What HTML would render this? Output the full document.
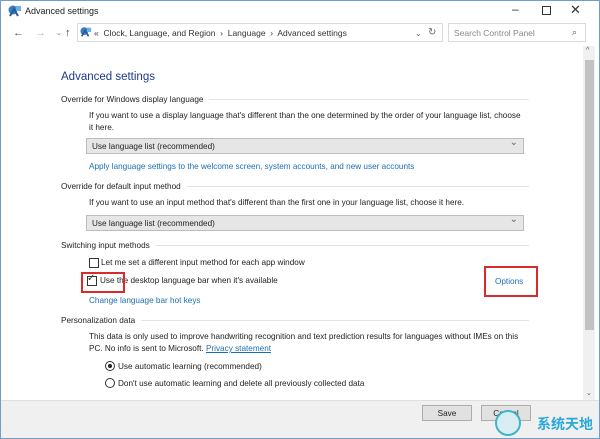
<!DOCTYPE html>
<html><head><meta charset="utf-8"><style>
*{box-sizing:border-box;margin:0;padding:0}
body{width:600px;height:439px;overflow:hidden;background:#fff;font-family:"Liberation Sans",sans-serif;font-size:8.2px;color:#222;position:relative}
.a{position:absolute;white-space:nowrap}
.win{position:absolute;left:0;top:0;width:600px;height:439px;border:1px solid #6f9fc8}
.blue{color:#1a6fb4}
.h{position:absolute;left:61px;width:468px;display:flex;align-items:center;white-space:nowrap}
.h:after{content:"";flex:1;height:1px;background:#e3e3e3;margin-left:6px}
.dd{position:absolute;left:86px;width:438px;height:16px;background:#e6e6e6;border:1px solid #bdbdbd;padding:3px 0 0 5px}
.dd:after{content:"⌄";position:absolute;right:5px;top:-2px;color:#666;font-size:10px}
.cb{position:absolute;width:10px;height:10px;border:1px solid #333;background:#fff}
.rb{position:absolute;width:10px;height:10px;border:1px solid #333;border-radius:50%;background:#fff}
.btn{position:absolute;top:405px;width:50px;height:16px;background:#e1e1e1;border:1px solid #adadad;text-align:center;padding-top:3px}
.red{position:absolute;border:2px solid #d92b2b}
</style></head><body>
<div class="win"></div>
<svg class="a" style="left:8px;top:4px" width="14" height="14" viewBox="0 0 14 14"><circle cx="5" cy="6" r="4.5" fill="#3a7dc0"/><path d="M2 12 L6 5 L10 12" stroke="#2a5e98" stroke-width="2" fill="none"/><rect x="8" y="2" width="5" height="5" fill="#6ab0e0"/></svg>
<div class="a" style="left:25px;top:6px;font-size:9px">Advanced settings</div>
<div class="a" style="left:512px;top:2px;font-size:12px;color:#333">–</div>
<div class="a" style="left:542px;top:6px;width:9px;height:9px;border:1px solid #333"></div>
<div class="a" style="left:570px;top:2px;font-size:13px;color:#333">✕</div>
<div class="a" style="left:13px;top:27px;font-size:11px;color:#555">←</div>
<div class="a" style="left:35px;top:27px;font-size:11px;color:#bbb">→</div>
<div class="a" style="left:56px;top:29px;font-size:7px;color:#777">⌄</div>
<div class="a" style="left:65px;top:27px;font-size:11px;color:#444">↑</div>
<div class="a" style="left:77px;top:23px;width:366px;height:19px;border:1px solid #d9d9d9"></div>
<svg class="a" style="left:80px;top:26px" width="12" height="12" viewBox="0 0 14 14"><circle cx="5" cy="6" r="4.5" fill="#3a7dc0"/><path d="M2 12 L6 5 L10 12" stroke="#2a5e98" stroke-width="2" fill="none"/><rect x="8" y="2" width="5" height="5" fill="#6ab0e0"/></svg>
<div class="a" style="left:94px;top:28px;color:#333;font-size:8.5px">«&nbsp; Clock, Language, and Region &nbsp;›&nbsp; Language &nbsp;›&nbsp; Advanced settings</div>
<div class="a" style="left:415px;top:28px;color:#666">⌄</div>
<div class="a" style="left:428px;top:27px;color:#666;font-size:10px">↻</div>
<div class="a" style="left:448px;top:23px;width:138px;height:19px;border:1px solid #d9d9d9"></div>
<div class="a" style="left:454px;top:28px;color:#888;font-size:8.5px">Search Control Panel</div>
<div class="a" style="left:572px;top:27px;color:#555;font-size:9px">⌕</div>
<div class="a" style="left:583px;top:46px;width:12px;height:355px;background:#f0f0f0"></div>
<div class="a" style="left:585px;top:60px;width:9px;height:270px;background:#c2c2c2"></div>
<div class="a" style="left:586px;top:47px;font-size:7px;color:#555">^</div>
<div class="a" style="left:586px;top:389px;font-size:7px;color:#555">⌄</div>
<div class="a" style="left:61px;top:71px;font-size:11.5px;color:#1e3a8a">Advanced settings</div>
<div class="h" style="top:95px">Override for Windows display language</div>
<div class="a" style="left:89px;top:111px">If you want to use a display language that's different than the one determined by the order of your language list, choose</div>
<div class="a" style="left:89px;top:123px">it here.</div>
<div class="dd" style="top:138px">Use language list (recommended)</div>
<div class="a blue" style="left:89px;top:162px">Apply language settings to the welcome screen, system accounts, and new user accounts</div>
<div class="h" style="top:182px">Override for default input method</div>
<div class="a" style="left:89px;top:198px">If you want to use an input method that's different than the first one in your language list, choose it here.</div>
<div class="dd" style="top:215px">Use language list (recommended)</div>
<div class="h" style="top:241px">Switching input methods</div>
<div class="cb" style="left:89px;top:258px"></div>
<div class="a" style="left:101px;top:258px">Let me set a different input method for each app window</div>
<div class="cb" style="left:87px;top:276px"></div>
<div class="a" style="left:87px;top:273px;font-size:10px;color:#333">✓</div>
<div class="a" style="left:100px;top:276px">Use the desktop language bar when it's available</div>
<div class="red" style="left:81px;top:272px;width:44px;height:21px"></div>
<div class="red" style="left:484px;top:266px;width:54px;height:31px"></div>
<div class="a blue" style="left:495px;top:277px">Options</div>
<div class="a blue" style="left:89px;top:296px">Change language bar hot keys</div>
<div class="h" style="top:316px">Personalization data</div>
<div class="a" style="left:89px;top:332px">This data is only used to improve handwriting recognition and text prediction results for languages without IMEs on this</div>
<div class="a" style="left:89px;top:344px">PC. No info is sent to Microsoft. <span class="blue" style="text-decoration:underline">Privacy statement</span></div>
<div class="rb" style="left:105px;top:361px"></div><div class="a" style="left:108px;top:364px;width:4px;height:4px;border-radius:50%;background:#222"></div>
<div class="a" style="left:118px;top:362px">Use automatic learning (recommended)</div>
<div class="rb" style="left:105px;top:378px"></div>
<div class="a" style="left:118px;top:379px">Don't use automatic learning and delete all previously collected data</div>
<div class="a" style="left:1px;top:400px;width:598px;height:38px;background:#f0f0f0;border-top:1px solid #dfdfdf"></div>
<div class="btn" style="left:422px">Save</div>
<div class="btn" style="left:481px">Cancel</div>
<div class="a" style="left:495px;top:410px;width:26px;height:26px;border-radius:50%;background:#d8eef2;border:2px solid #3fb5c8"></div>
<div class="a" style="left:537px;top:414px;font-size:14px;font-weight:bold;color:#2aa8d8;font-family:'Noto Sans CJK SC',sans-serif">系统天地</div>
</body></html>
